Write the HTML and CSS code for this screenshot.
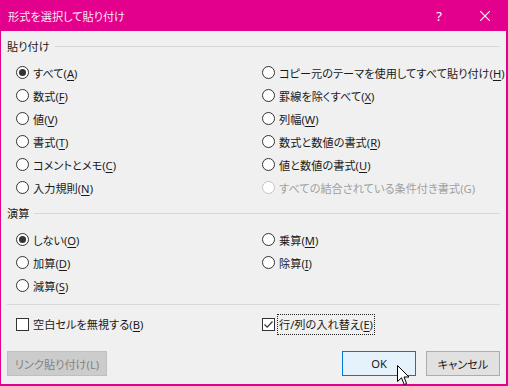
FILE: index.html
```html
<!DOCTYPE html>
<html lang="ja">
<head>
  <meta charset="UTF-8" />
  <title>形式を選択して貼り付け</title>
  <link rel="stylesheet" href="styles.css">
</head>
<body>
  <div class="dialog">
    <div class="titlebar">
      <span class="title">形式を選択して貼り付け</span>
      <span class="tb-btn">?</span>
      <span class="tb-btn">
        <svg width="10" height="10" viewBox="0 0 10 10"><path d="M0 0L10 10M10 0L0 10" stroke="#fff" stroke-width="1.1"/></svg>
      </span>
    </div>

    <div class="content">
      <div class="group-head"><span>貼り付け</span><i></i></div>
      <div class="options">
        <label class="opt"><span class="radio checked"></span><span>すべて(<u>A</u>)</span></label>
        <label class="opt"><span class="radio"></span><span>コピー元のテーマを使用してすべて貼り付け(<u>H</u>)</span></label>
        <label class="opt"><span class="radio"></span><span>数式(<u>F</u>)</span></label>
        <label class="opt"><span class="radio"></span><span>罫線を除くすべて(<u>X</u>)</span></label>
        <label class="opt"><span class="radio"></span><span>値(<u>V</u>)</span></label>
        <label class="opt"><span class="radio"></span><span>列幅(<u>W</u>)</span></label>
        <label class="opt"><span class="radio"></span><span>書式(<u>T</u>)</span></label>
        <label class="opt"><span class="radio"></span><span>数式と数値の書式(<u>R</u>)</span></label>
        <label class="opt"><span class="radio"></span><span>コメントとメモ(<u>C</u>)</span></label>
        <label class="opt"><span class="radio"></span><span>値と数値の書式(<u>U</u>)</span></label>
        <label class="opt"><span class="radio"></span><span>入力規則(<u>N</u>)</span></label>
        <label class="opt disabled"><span class="radio"></span><span>すべての結合されている条件付き書式(G)</span></label>
      </div>

      <div class="group-head second"><span>演算</span><i></i></div>
      <div class="options">
        <label class="opt"><span class="radio checked"></span><span>しない(<u>O</u>)</span></label>
        <label class="opt"><span class="radio"></span><span>乗算(<u>M</u>)</span></label>
        <label class="opt"><span class="radio"></span><span>加算(<u>D</u>)</span></label>
        <label class="opt"><span class="radio"></span><span>除算(<u>I</u>)</span></label>
        <label class="opt"><span class="radio"></span><span>減算(<u>S</u>)</span></label>
      </div>

      <div class="separator"></div>

      <div class="options checks">
        <label class="opt"><span class="check"></span><span>空白セルを無視する(<u>B</u>)</span></label>
        <label class="opt"><span class="check">
          <svg width="11" height="11" viewBox="0 0 11 11"><path d="M1.5 5.5L4.2 8.2L9.5 2.5" fill="none" stroke="#333" stroke-width="1.2"/></svg>
        </span><span class="focus">行/列の入れ替え(<u>E</u>)</span></label>
      </div>

      <div class="buttons">
        <button class="btn disabled">リンク貼り付け(L)</button>
        <span class="spacer"></span>
        <button class="btn default">OK</button>
        <button class="btn">キャンセル</button>
      </div>
    </div>

    <svg class="cursor" width="13" height="21" viewBox="0 0 13 21">
      <path d="M0.5 0.5L0.5 16.5L4.5 12.8L7.2 19.5L9.6 18.5L7 12L12 12Z" fill="#fff" stroke="#000" stroke-width="1" stroke-linejoin="miter"/>
    </svg>
  </div>
</body>
</html>
```

FILE: styles.css
```css
body {
  margin: 0;
  background: #f0f0f0;
  font-family: "Noto Sans", "Noto Sans CJK JP", sans-serif;
  font-size: 11.2px;
  color: #1a1a1a;
  font-feature-settings: "palt";
}

.dialog {
  position: relative;
  width: 508px;
  height: 386px;
  box-sizing: border-box;
  background: #f0f0f0;
  border: 1px solid #e3008c;
  border-width: 0 2px 2px 1px;
  display: flex;
  flex-direction: column;
}

.titlebar {
  height: 31px;
  margin: 0 -2px 0 -1px;
  background: #e3008c;
  display: flex;
  align-items: center;
  color: #fbe6f3;
}

.title {
  flex: 1;
  padding-left: 8px;
}

.tb-btn {
  width: 46px;
  height: 31px;
  display: flex;
  align-items: center;
  justify-content: center;
  font-size: 13px;
  color: #fff;
}

.content {
  flex: 1;
  padding: 6px 6px 0 6px;
  display: flex;
  flex-direction: column;
}

.group-head {
  height: 18px;
  display: flex;
  align-items: center;
  gap: 5px;
  margin-bottom: 6px;
}

.group-head.second {
  margin-top: 5px;
}

.group-head i {
  flex: 1;
  height: 1px;
  background: #d8d8d8;
}

.options {
  display: grid;
  grid-template-columns: 246px 1fr;
  grid-auto-rows: 23px;
  padding-left: 9px;
}

.opt {
  display: flex;
  align-items: center;
  gap: 4px;
  white-space: nowrap;
}

.opt u {
  text-decoration-thickness: 1px;
  text-underline-offset: 2px;
}

.radio {
  width: 13px;
  height: 13px;
  box-sizing: border-box;
  border: 1px solid #333;
  border-radius: 50%;
  background: #fff;
  position: relative;
  flex-shrink: 0;
}

.radio.checked::after {
  content: "";
  position: absolute;
  left: 2px;
  top: 2px;
  width: 7px;
  height: 7px;
  border-radius: 50%;
  background: #333;
}

.disabled {
  color: #a0a0a0;
}

.disabled .radio {
  border-color: #c4c4c4;
}

.separator {
  height: 1px;
  background: #d8d8d8;
  margin: 7px 0 8px;
}

.checks {
  grid-auto-rows: 22px;
}

.check {
  width: 13px;
  height: 13px;
  box-sizing: border-box;
  border: 1px solid #333;
  background: #fff;
  display: flex;
  align-items: center;
  justify-content: center;
  flex-shrink: 0;
}

.focus {
  outline: 1px dotted #222;
  padding: 1px 1px 2px;
  margin-left: -1px;
}

.buttons {
  display: flex;
  gap: 10px;
  margin-top: 16px;
}

.spacer {
  flex: 1;
}

.btn {
  height: 25px;
  font: inherit;
  color: #1a1a1a;
  background: #e1e1e1;
  border: 1px solid #adadad;
  padding: 0;
  width: 74px;
}

.btn.disabled {
  width: 100px;
  background: #cccccc;
  border-color: #bfbfbf;
  color: #838383;
}

.btn.default {
  background: #e5f1fb;
  border-color: #0078d7;
}

.cursor {
  position: absolute;
  left: 396px;
  top: 365px;
}
```
